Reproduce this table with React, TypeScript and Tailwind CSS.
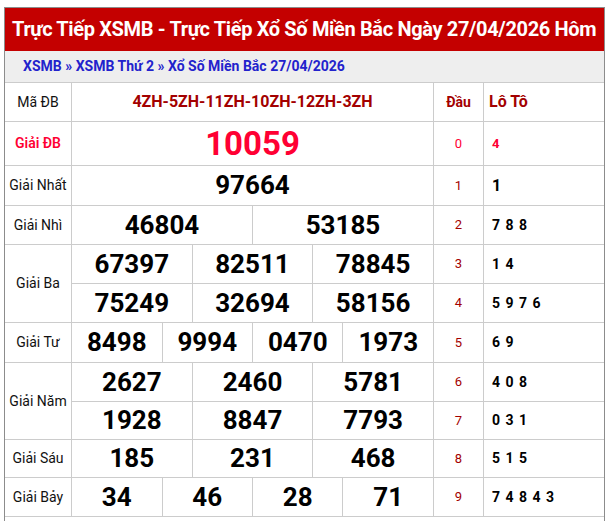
import React from "react";

type Prize = {
  label: string;
  lines: string[][];
};

const prizes: Prize[] = [
  { label: "Giải ĐB", lines: [["10059"]] },
  { label: "Giải Nhất", lines: [["97664"]] },
  { label: "Giải Nhì", lines: [["46804", "53185"]] },
  { label: "Giải Ba", lines: [["67397", "82511", "78845"], ["75249", "32694", "58156"]] },
  { label: "Giải Tư", lines: [["8498", "9994", "0470", "1973"]] },
  { label: "Giải Năm", lines: [["2627", "2460", "5781"], ["1928", "8847", "7793"]] },
  { label: "Giải Sáu", lines: [["185", "231", "468"]] },
  { label: "Giải Bảy", lines: [["34", "46", "28", "71"]] },
];

const loto = ["4", "1", "7 8 8", "1 4", "5 9 7 6", "6 9", "4 0 8", "0 3 1", "5 1 5", "7 4 8 4 3"];

const span: Record<number, string> = {
  1: "col-span-12",
  2: "col-span-6",
  3: "col-span-4",
  4: "col-span-3",
};

function DauCell({ n }: { n: number }) {
  return (
    <div className={`flex items-center justify-center bg-white text-[13px] ${n === 0 ? "text-[#ff0033]" : "text-[#a30000]"}`}>
      {n}
    </div>
  );
}

function LotoCell({ n }: { n: number }) {
  let cls = "text-[14px] tracking-[1px] text-black";
  if (n === 0) cls = "text-[13px] text-[#ff0033]";
  if (n === 1) cls = "text-[16px] text-black";
  return <div className={`flex items-center bg-white pl-2 font-bold ${cls}`}>{loto[n]}</div>;
}

export default function App() {
  let dau = 0;

  return (
    <div className="min-h-screen bg-white font-['Roboto','Liberation_Sans',sans-serif]">
      <div className="mx-1 mt-[7px] border border-[#8c8c8c]">
        <h1 className="h-[43px] overflow-hidden whitespace-nowrap bg-[#c40000] pl-[7px] text-[20px] font-bold leading-[43px] tracking-[-0.35px] text-white">
          Trực Tiếp XSMB - Trực Tiếp Xổ Số Miền Bắc Ngày 27/04/2026 Hôm
        </h1>

        <div className="h-[32px] border-b border-[#cccccc] bg-[#eeeeee] pl-[18px] text-[14px] font-bold leading-[31px] text-[#2222cc]">
          <span>XSMB » XSMB Thứ 2 » Xổ Số Miền Bắc 27/04/2026</span>
        </div>

        <div className="grid grid-cols-[66px_repeat(12,1fr)_49px_120px] grid-rows-[38px_43px_39px_38px_38px_38px_39px_38px_37px_37px_38px] gap-px border-b border-[#cccccc] bg-[#cccccc]">
          {/* header row */}
          <div className="flex items-center justify-center bg-white text-[14px] text-[#111]">Mã ĐB</div>
          <div className="col-span-12 flex items-center justify-center bg-white text-[16px] font-bold text-[#a30000]">
            4ZH-5ZH-11ZH-10ZH-12ZH-3ZH
          </div>
          <div className="flex items-center justify-center bg-white text-[14px] font-bold text-[#a30000]">Đầu</div>
          <div className="flex items-center bg-white pl-[5px] text-[16px] font-bold text-[#a30000]">Lô Tô</div>

          {prizes.map((p, pi) => (
            <React.Fragment key={p.label}>
              <div
                className={`flex items-center justify-center bg-white text-[14px] ${
                  p.lines.length > 1 ? "row-span-2" : ""
                } ${pi === 0 ? "font-semibold text-[#ff0033]" : "text-[#111]"}`}
              >
                {p.label}
              </div>
              {p.lines.map((line, li) => {
                const d = dau++;
                return (
                  <React.Fragment key={li}>
                    {line.map((num, ni) => (
                      <div
                        key={ni}
                        className={`${span[line.length]} flex items-center justify-center bg-white font-bold ${
                          pi === 0 ? "text-[33px] text-[#ff0033]" : "text-[26px] text-black"
                        }`}
                      >
                        {num}
                      </div>
                    ))}
                    <DauCell n={d} />
                    <LotoCell n={d} />
                  </React.Fragment>
                );
              })}
            </React.Fragment>
          ))}
        </div>

        <div className="h-[30px]" />
      </div>
    </div>
  );
}
